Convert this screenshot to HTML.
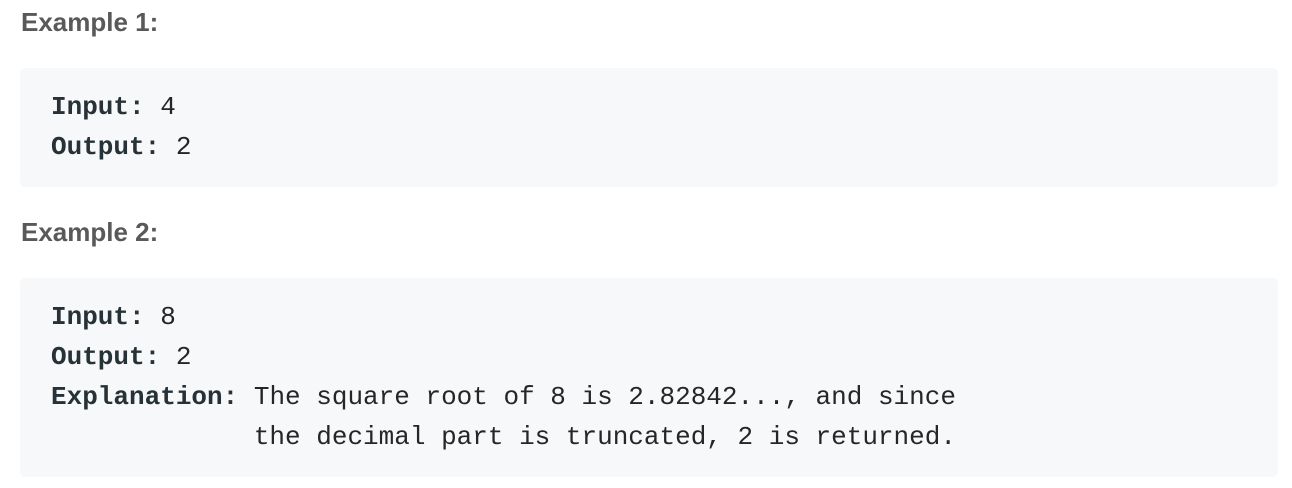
<!DOCTYPE html>
<html><head><style>
html,body{margin:0;padding:0;background:#fff;width:1292px;height:488px;overflow:hidden}
.h{position:absolute;left:21px;font-family:"Liberation Sans",sans-serif;font-weight:bold;font-size:26px;color:#595959;line-height:30px}
.b{position:absolute;left:20px;width:1258px;background:#f7f8fa;border-radius:5px;box-sizing:border-box;padding:19px 0 0 31px;font-family:"Liberation Mono",monospace;font-size:26px;line-height:40px;color:#262626;white-space:pre}
b{color:#263238}
</style></head><body>
<div class="h" style="top:7px">Example 1:</div>
<div class="b" style="top:68px;height:119px"><b>Input:</b> 4
<b>Output:</b> 2</div>
<div class="h" style="top:217px">Example 2:</div>
<div class="b" style="top:278px;height:199px"><b>Input:</b> 8
<b>Output:</b> 2
<b>Explanation:</b> The square root of 8 is 2.82842..., and since
             the decimal part is truncated, 2 is returned.</div>
</body></html>
